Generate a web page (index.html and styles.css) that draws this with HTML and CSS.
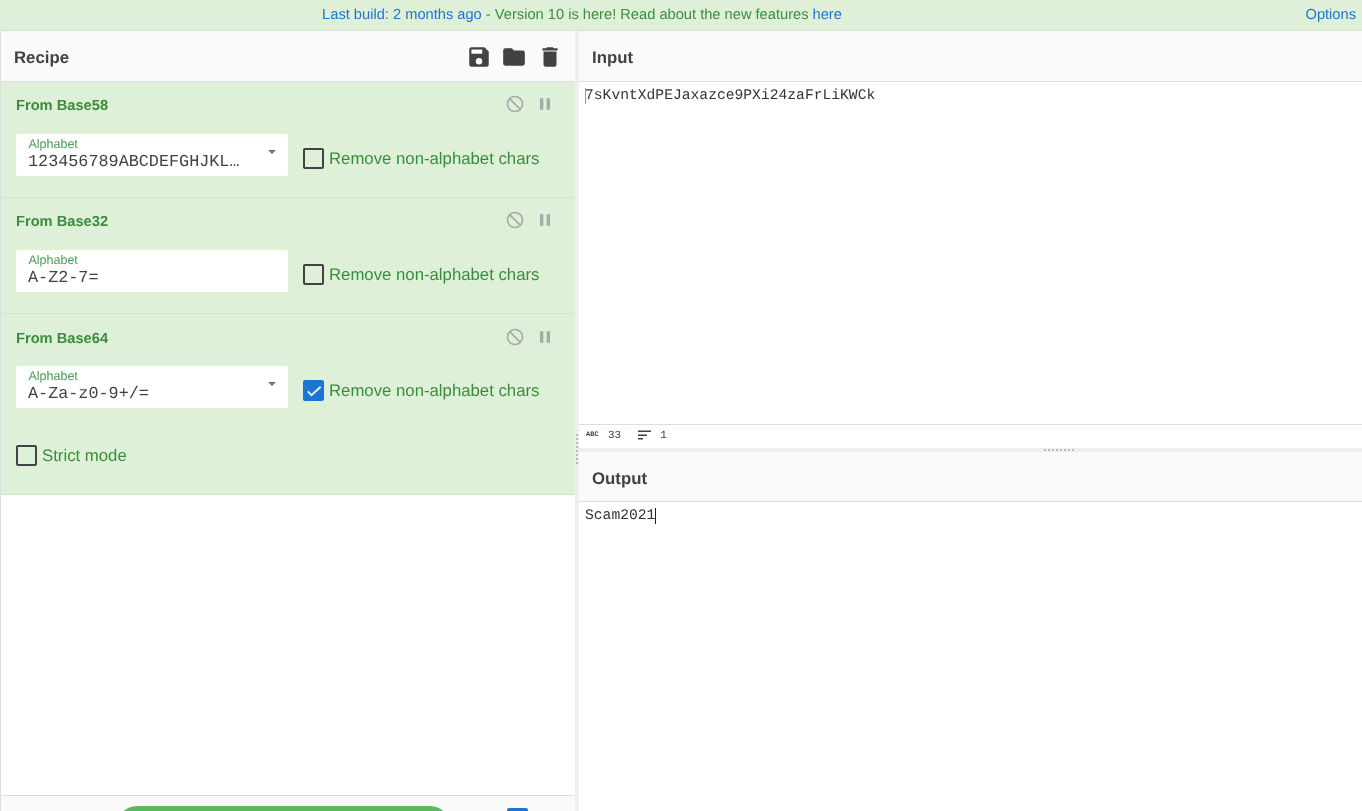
FILE: index.html
```html
<!DOCTYPE html>
<html lang="en">
<head>
<meta charset="utf-8">
<title>CyberChef</title>
<link rel="stylesheet" href="styles.css">
</head>
<body>
<header class="banner">
  <div class="banner-msg"><a href="#">Last build: 2 months ago</a> - Version 10 is here! Read about the new features <a href="#">here</a></div>
  <a class="banner-opt" href="#">Options</a>
</header>
<main class="app">
  <section class="recipe">
    <div class="title recipe-title">
      <span>Recipe</span>
      <div class="tools">
        <svg viewBox="0 0 24 24" class="tool"><path d="M17 3H5a2 2 0 0 0-2 2v14a2 2 0 0 0 2 2h14a2 2 0 0 0 2-2V7l-4-4zm-5 16a3 3 0 1 1 0-6 3 3 0 0 1 0 6zm3-10H5V5h10v4z"/></svg>
        <svg viewBox="0 0 24 24" class="tool"><path d="M10 4H4a2 2 0 0 0-2 2v12a2 2 0 0 0 2 2h16a2 2 0 0 0 2-2V8a2 2 0 0 0-2-2h-8l-2-2z"/></svg>
        <svg viewBox="0 0 24 24" class="tool"><path d="M6 19a2 2 0 0 0 2 2h8a2 2 0 0 0 2-2V7H6v12zM19 4h-3.5l-1-1h-5l-1 1H5v2h14V4z"/></svg>
      </div>
    </div>
    <div class="ops">
      <article class="op">
        <div class="op-head">
          <span class="op-name">From Base58</span>
          <div class="op-icons">
            <svg viewBox="0 0 24 24" class="op-icon"><path d="M12 2a10 10 0 1 0 0 20 10 10 0 0 0 0-20zM20 12a8 8 0 0 0-12.9-6.3L18.3 16.9A7.9 7.9 0 0 0 20 12zm-8 8a7.9 7.9 0 0 0 4.9-1.7L5.7 7.1A8 8 0 0 0 12 20z"/></svg>
            <svg viewBox="0 0 24 24" class="op-icon"><path d="M6 19h4V5H6v14zm8-14v14h4V5h-4z"/></svg>
          </div>
        </div>
        <div class="op-args">
          <div class="field">
            <label class="field-label">Alphabet</label>
            <div class="field-value">123456789ABCDEFGHJKL…</div>
            <span class="caret"></span>
          </div>
          <label class="check"><span class="box"></span>Remove non-alphabet chars</label>
        </div>
      </article>
      <article class="op">
        <div class="op-head">
          <span class="op-name">From Base32</span>
          <div class="op-icons">
            <svg viewBox="0 0 24 24" class="op-icon"><path d="M12 2a10 10 0 1 0 0 20 10 10 0 0 0 0-20zM20 12a8 8 0 0 0-12.9-6.3L18.3 16.9A7.9 7.9 0 0 0 20 12zm-8 8a7.9 7.9 0 0 0 4.9-1.7L5.7 7.1A8 8 0 0 0 12 20z"/></svg>
            <svg viewBox="0 0 24 24" class="op-icon"><path d="M6 19h4V5H6v14zm8-14v14h4V5h-4z"/></svg>
          </div>
        </div>
        <div class="op-args">
          <div class="field">
            <label class="field-label">Alphabet</label>
            <div class="field-value">A-Z2-7=</div>
          </div>
          <label class="check"><span class="box"></span>Remove non-alphabet chars</label>
        </div>
      </article>
      <article class="op op-last">
        <div class="op-head">
          <span class="op-name">From Base64</span>
          <div class="op-icons">
            <svg viewBox="0 0 24 24" class="op-icon"><path d="M12 2a10 10 0 1 0 0 20 10 10 0 0 0 0-20zM20 12a8 8 0 0 0-12.9-6.3L18.3 16.9A7.9 7.9 0 0 0 20 12zm-8 8a7.9 7.9 0 0 0 4.9-1.7L5.7 7.1A8 8 0 0 0 12 20z"/></svg>
            <svg viewBox="0 0 24 24" class="op-icon"><path d="M6 19h4V5H6v14zm8-14v14h4V5h-4z"/></svg>
          </div>
        </div>
        <div class="op-args">
          <div class="field">
            <label class="field-label">Alphabet</label>
            <div class="field-value">A-Za-z0-9+/=</div>
            <span class="caret"></span>
          </div>
          <label class="check"><span class="box box-on"><svg viewBox="0 0 24 24" class="tick"><path d="M4.5 12.5l4.5 4.5L20 7"/></svg></span>Remove non-alphabet chars</label>
        </div>
        <label class="check check-strict"><span class="box"></span>Strict mode</label>
      </article>
    </div>
    <div class="bake-bar">
      <div class="bake"></div>
      <span class="auto-box"></span>
    </div>
  </section>
  <div class="gutter"><span class="grip-v"></span></div>
  <section class="io">
    <div class="title">Input</div>
    <div class="text-area text-input"><span class="cursor cursor-dim"></span>7sKvntXdPEJaxazce9PXi24zaFrLiKWCk</div>
    <div class="status">
      <span class="abc">abc</span><span>33</span>
      <svg viewBox="0 0 16 16" class="lines"><path d="M1 3.5h13V5H1zM1 7.5h9V9H1zM1 11h5v1.5H1z"/></svg><span>1</span>
    </div>
    <div class="divider"><span class="grip-h"></span></div>
    <div class="title title-output">Output</div>
    <div class="text-area text-output">Scam2021<span class="cursor"></span></div>
  </section>
</main>
</body>
</html>
```
FILE: styles.css
```css
* { box-sizing: border-box; }
html, body { margin: 0; height: 100%; overflow: hidden; }
body {
  display: flex;
  flex-direction: column;
  font-family: "Liberation Sans", Arial, sans-serif;
  text-rendering: geometricPrecision;
  background: #fff;
  color: #424242;
}
a { color: #1976d2; text-decoration: none; }

.banner, .app { will-change: transform; }

.banner {
  flex: none;
  height: 31px;
  display: flex;
  align-items: center;
  justify-content: space-between;
  padding: 0 6px 0 0;
  background: #dff0d8;
  border-bottom: 1px solid #ddd;
  color: #3c8c40;
  font-size: 14.67px;
}
.banner-msg { width: 1164px; text-align: center; }

.app { flex: 1; min-height: 0; display: flex; }

.recipe {
  width: 575px;
  flex: none;
  display: flex;
  flex-direction: column;
  border-left: 1px solid #ddd;
}
.title {
  flex: none;
  height: 51px;
  display: flex;
  align-items: center;
  justify-content: space-between;
  padding: 3px 13px 0;
  background: #fafafa;
  border-bottom: 1px solid #ddd;
  font-size: 16.8px;
  font-weight: 700;
  color: #424242;
}
.tools { display: flex; gap: 9.5px; margin: -2px -0.5px 0 0; }
.tool { width: 26px; height: 26px; fill: #424242; display: block; }

.ops { flex: 1; min-height: 0; }
.op {
  height: 116px;
  padding: 12px 15px 0;
  background: #dff0d8;
  border-bottom: 1px solid #d3e6cb;
}
.op-last { height: 181px; padding-top: 13px; border-bottom-color: #cfe6c5; }
.op-head { display: flex; justify-content: space-between; align-items: center; height: 22px; }
.op-name { font-size: 14.67px; font-weight: 700; color: #3c8c40; margin-top: 2px; }
.op-icons { display: flex; gap: 10px; margin-right: 5px; margin-top: -2px; }
.op-icon { width: 20px; height: 20px; fill: #a9a9a9; fill-rule: evenodd; display: block; }

.op-args { display: flex; align-items: center; margin-top: 18px; }
.op-last .op-args { margin-top: 17px; }
.field {
  position: relative;
  width: 272px;
  height: 42px;
  padding: 3px 12px 0;
  background: #fff;
  border-radius: 2px;
}
.field-label { display: block; margin-left: 0.5px; font-size: 12.5px; line-height: 14px; color: #4a9c50; }
.field-value {
  font-family: "Liberation Mono", "Courier New", monospace;
  font-size: 16.8px;
  line-height: 20px;
  margin-top: 2px;
  color: #424242;
  white-space: nowrap;
}
.caret {
  position: absolute;
  top: 16px;
  right: 12px;
  border: 4.5px solid transparent;
  border-top-color: #6c757d;
  border-bottom-width: 0;
}
.check { display: flex; align-items: center; color: #388e3c; font-size: 16.75px; }
.op-args .check { margin-left: 15px; margin-top: 7px; }
.box {
  width: 21px;
  height: 21px;
  margin-right: 5px;
  border: 2px solid #424242;
  border-radius: 2px;
  flex: none;
}
.box-on { background: #1976d2; border-color: #1976d2; display: flex; align-items: center; justify-content: center; }
.tick { width: 20px; height: 20px; flex: none; fill: none; stroke: #e9f3fb; stroke-width: 2.3; }
.check-strict { margin-top: 37px; }

.bake-bar {
  flex: none;
  height: 16px;
  position: relative;
  background: #fafafa;
  border-top: 1px solid #ddd;
  overflow: hidden;
}
.bake {
  position: absolute;
  left: 116px;
  top: 10px;
  width: 333px;
  height: 40px;
  border-radius: 20px;
  background: #5cb85c;
}
.auto-box {
  position: absolute;
  left: 506px;
  top: 12px;
  width: 21px;
  height: 21px;
  border-radius: 2px;
  background: #1976d2;
}

.gutter {
  flex: none;
  width: 4px;
  position: relative;
  background: #eee;
}
.grip-v {
  position: absolute;
  left: 1px;
  top: 403px;
  width: 2px;
  height: 32px;
  background: repeating-linear-gradient(to bottom, #bbb 0 2px, transparent 2px 4px);
}

.io { flex: 1; min-width: 0; display: flex; flex-direction: column; }
.text-area {
  font-family: "Liberation Mono", "Courier New", monospace;
  font-size: 14.67px;
  line-height: 17px;
  padding: 6px 6px 0;
  color: #333;
  white-space: pre;
}
.text-input { height: 343px; border-bottom: 1px solid #ddd; }
.text-output { flex: 1; }
.cursor {
  display: inline-block;
  width: 1px;
  height: 16px;
  margin-right: -1px;
  background: #222;
  vertical-align: -5px;
}
.cursor-dim { background: #999; }

.status {
  flex: none;
  height: 23px;
  display: flex;
  align-items: center;
  padding: 0 0 2px 7px;
  font-family: "Liberation Mono", "Courier New", monospace;
  font-size: 11px;
  color: #424242;
}
.abc { font-size: 7px; font-weight: 700; margin: 0 8px 1px 0; text-transform: uppercase; width: 14px; }
.lines { width: 16px; height: 16px; margin: 0 7px 1px 16px; fill: #424242; }

.divider {
  flex: none;
  height: 4px;
  position: relative;
  background: #eee;
}
.grip-h {
  position: absolute;
  left: 465px;
  top: 1px;
  width: 32px;
  height: 2px;
  background: repeating-linear-gradient(to right, #bbb 0 2px, transparent 2px 4px);
}
.io .title { justify-content: flex-start; }
.io .title-output { height: 50px; padding-top: 4px; }
```
